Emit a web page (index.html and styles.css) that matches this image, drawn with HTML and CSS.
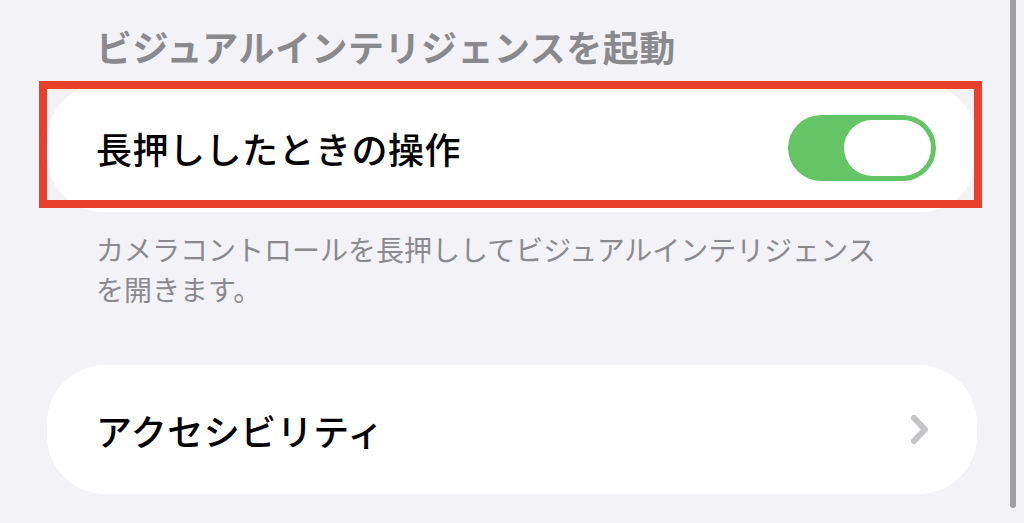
FILE: index.html
```html
<!DOCTYPE html>
<html lang="ja">
<head>
    <meta charset="UTF-8">
    <meta name="viewport" content="width=device-width, initial-scale=1.0">
    <title>カメラコントロール</title>
    <link rel="stylesheet" href="styles.css">
</head>
<body>

    <div class="page">
        <!-- Section header -->
        <h2 class="section-title">ビジュアルインテリジェンスを起動</h2>

        <!-- Long press toggle (highlighted) -->
        <div class="card">
            <span class="card-label">長押ししたときの操作</span>
            <div class="toggle on">
                <div class="knob"></div>
            </div>
            <div class="highlight"></div>
        </div>

        <p class="section-footer">カメラコントロールを長押ししてビジュアルインテリジェンスを開きます。</p>

        <!-- Accessibility link -->
        <div class="card link-card">
            <span class="card-label">アクセシビリティ</span>
            <svg class="chevron" width="20" height="31" viewBox="0 0 20 31">
                <path d="M4 4 L15 15.5 L4 27" fill="none" stroke="#c4c4c7" stroke-width="6" stroke-linecap="round" stroke-linejoin="round"/>
            </svg>
        </div>
    </div>

    <div class="scrollbar"></div>

</body>
</html>
```

FILE: styles.css
```css
body {
    font-family: "Noto Sans CJK JP", "Noto Sans", sans-serif;
    background-color: #f2f2f7;
    margin: 0;
    padding: 0;
    overflow: hidden;
}

.page {
    padding: 0 47px;
}

.section-title {
    margin: 0;
    padding: 22px 0 0 49px;
    height: 62px;
    font-size: 36px;
    font-weight: 700;
    line-height: 48px;
    color: #8a8a8e;
    letter-spacing: 0.5px;
}

.card {
    position: relative;
    height: 128px;
    background: white;
    border-radius: 56px;
    display: flex;
    align-items: center;
    justify-content: space-between;
    padding: 0 41px 0 49px;
}

.card-label {
    font-size: 36px;
    font-weight: 500;
    color: #000;
    letter-spacing: 0.5px;
}

.toggle {
    width: 148px;
    height: 66px;
    border-radius: 33px;
    background-color: #e9e9ea;
    position: relative;
}

.toggle.on {
    background-color: #65c466;
}

.knob {
    position: absolute;
    top: 5px;
    right: 5px;
    width: 87px;
    height: 56px;
    border-radius: 28px;
    background: white;
}

.highlight {
    position: absolute;
    left: -8px;
    top: -3px;
    right: -5px;
    bottom: 4px;
    border: 8px solid #e8402a;
}

.section-footer {
    margin: 0;
    padding: 17px 0 0 49px;
    height: 153px;
    box-sizing: border-box;
    max-width: 850px;
    font-size: 28px;
    line-height: 40px;
    color: #8a8a8e;
}

.link-card {
    height: 129px;
    border-radius: 58px;
    padding-right: 47px;
}

.scrollbar {
    position: absolute;
    top: -10px;
    left: 1010px;
    width: 6px;
    height: 518px;
    border-radius: 3px;
    background-color: #a0a0a4;
}
```
